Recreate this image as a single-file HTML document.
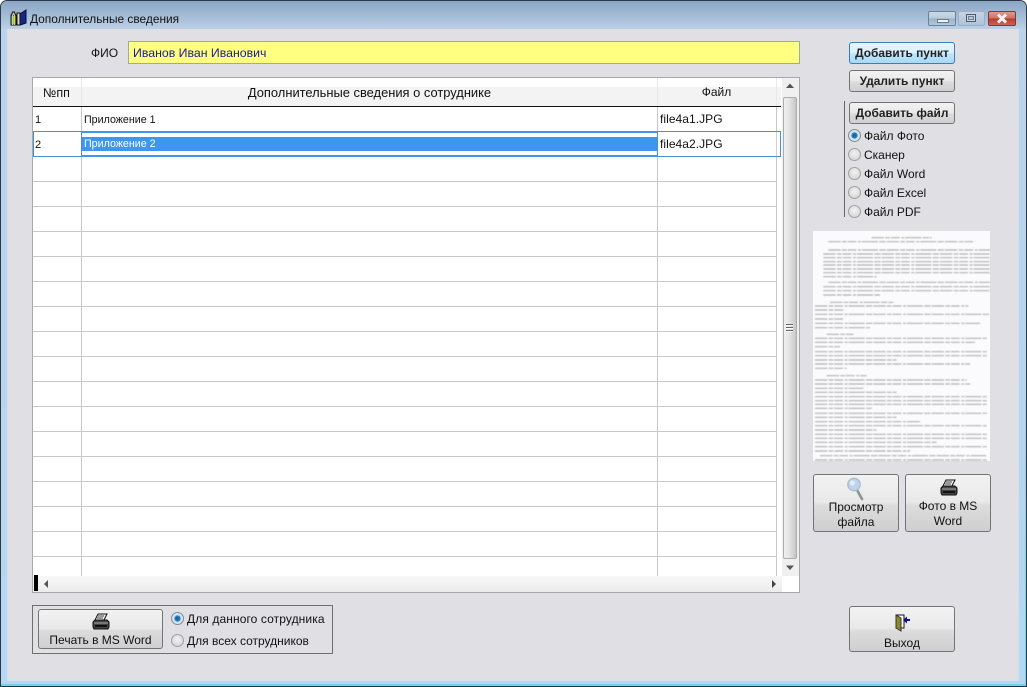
<!DOCTYPE html>
<html><head><meta charset="utf-8">
<style>
html,body{margin:0;padding:0;width:1027px;height:687px;overflow:hidden;background:#fff}
body{font-family:"Liberation Sans",sans-serif;font-size:12px;color:#111;position:relative}
div,span{position:absolute;box-sizing:border-box}
.t{white-space:nowrap;line-height:14px}
.btn{border:1px solid #747474;border-radius:3px;background:linear-gradient(#f2f2f2 0,#e9e9e9 48%,#dcdcdc 54%,#cfcfcf 100%);text-align:center;color:#111}
.btn.b{font-weight:bold;line-height:21px;font-size:11.9px;color:#222}
.rad{width:13px;height:13px;border-radius:50%;border:1px solid #a0a0a0;background:radial-gradient(circle at 50% 40%,#f2f2f2,#cfcfcf)}
.rad.on{background:radial-gradient(circle,#0b5c98 0,#2184c8 34%,#d8e2ea 46%,#e6e6e6 100%);border-color:#7d8c98}
.hl{height:1px;background:#c8c8c8;left:33px;width:743px}
.vl{width:1px;background:#c8c8c8;top:107px;height:469px}
</style></head><body>
<!-- window frame -->
<div style="left:0;top:0;width:1027px;height:687px;background:#b9d4ee;border:1px solid #2a3a48;border-radius:7px 7px 0 0;border-bottom-color:#14384e"></div>
<div style="left:1px;top:1px;width:1025px;height:28px;background:linear-gradient(#8aa6c4,#bcd0e6);border-radius:6px 6px 0 0"></div>
<div style="left:1px;top:29px;width:7px;height:655px;background:linear-gradient(#bcd3ea,#b8d6f2)"></div>
<div style="left:1018px;top:29px;width:8px;height:655px;background:linear-gradient(#bcd3ea,#b2d8f2)"></div>
<div style="left:1px;top:680px;width:1025px;height:5px;background:#b2d8f2"></div>
<div style="left:1px;top:684px;width:1025px;height:2px;background:#7ccdea"></div>
<div style="left:1025px;top:400px;width:1px;height:286px;background:linear-gradient(#a8cde6,#7ccdea)"></div>
<div style="left:7px;top:29px;width:1012px;height:652px;background:#d2e1ef"></div>
<div style="left:8px;top:29px;width:1010px;height:651px;background:#dfdfe4"></div>
<!-- title icon -->
<svg style="position:absolute;left:10px;top:9px" width="17" height="17" viewBox="0 0 17 17">
<path d="M1 6h5v10H1z" fill="#7fc08e" stroke="#111"/><path d="M2.500 6v10M4.500 6v10" stroke="#e4d850"/>
<path d="M1.500 6l1-3h2l1 3" fill="#bbb" stroke="#111"/>
<path d="M7 4h3v12H7z" fill="#e0e0a0" stroke="#111"/>
<path d="M10 5l6-4v13l-6 2z" fill="#14288c" stroke="#080830"/>
</svg>
<div class="t" style="left:30px;top:12px;font-size:11.9px;color:#111">Дополнительные сведения</div>
<!-- window buttons -->
<div style="left:928px;top:11px;width:28px;height:15px;border:1px solid #6a8298;border-radius:2px;background:linear-gradient(#ccdae8 0,#b8cadc 50%,#9ab2c8 51%,#b2c8dc 100%)"></div>
<div style="left:937px;top:19px;width:12px;height:4px;background:#eef3f8;border:1px solid #6a7b8c"></div>
<div style="left:958px;top:11px;width:27px;height:15px;border:1px solid #9cb1c5;border-radius:2px;background:linear-gradient(#c4d4e4,#afc4d9)"></div>
<div style="left:966px;top:14px;width:10px;height:8px;border:1px solid #4b5b6b;background:#c8d6e4"></div>
<div style="left:968px;top:16px;width:6px;height:4px;background:#b6c8da;border:1px solid #6f8092"></div>
<div style="left:988px;top:11px;width:28px;height:15px;border:1px solid #7a3b38;border-radius:2px;background:linear-gradient(#dc9a90 0,#cf6f62 50%,#b8392c 51%,#c9665a 100%)"></div>
<svg style="position:absolute;left:995px;top:13px" width="14" height="11" viewBox="0 0 14 11"><path d="M3 1.500l8 8M11 1.500l-8 8" stroke="#f4f4f4" stroke-width="3"/></svg>
<!-- FIO -->
<div class="t" style="left:91px;top:46px;font-size:12px">ФИО</div>
<div style="left:128px;top:41px;width:672px;height:23px;background:#ffff80;border:1px solid #9aa7b4"></div>
<div class="t" style="left:133px;top:46px;font-size:12.3px;color:#1a1a9a">Иванов Иван Иванович</div>
<!-- grid -->
<div style="left:32px;top:77px;width:768px;height:516px;background:#fff;border:1px solid #a9a9a9"></div>
<div style="left:33px;top:78px;width:748px;height:28px;background:linear-gradient(#fff 0,#fff 32%,#f3f3f3 33%,#f3f3f3 100%)"></div>
<div style="left:33px;top:106px;width:748px;height:1px;background:#111"></div>
<div style="left:81px;top:78px;width:1px;height:28px;background:#e8e8e8"></div>
<div style="left:657px;top:78px;width:1px;height:28px;background:#e8e8e8"></div>
<div style="left:776px;top:78px;width:1px;height:28px;background:#e8e8e8"></div>
<div class="t" style="left:43px;top:86px;font-size:12.5px">№пп</div>
<div class="t" style="left:82px;top:86px;width:575px;text-align:center;font-size:12.9px">Дополнительные сведения о сотруднике</div>
<div class="t" style="left:657px;top:85px;width:119px;text-align:center">Файл</div>
<div class="vl" style="left:81px"></div><div class="vl" style="left:657px"></div><div class="vl" style="left:776px"></div>
<div class="hl" style="top:131px"></div><div class="hl" style="top:156px"></div><div class="hl" style="top:181px"></div><div class="hl" style="top:206px"></div><div class="hl" style="top:231px"></div><div class="hl" style="top:256px"></div><div class="hl" style="top:281px"></div><div class="hl" style="top:306px"></div><div class="hl" style="top:331px"></div><div class="hl" style="top:356px"></div><div class="hl" style="top:381px"></div><div class="hl" style="top:406px"></div><div class="hl" style="top:431px"></div><div class="hl" style="top:456px"></div><div class="hl" style="top:481px"></div><div class="hl" style="top:506px"></div><div class="hl" style="top:531px"></div><div class="hl" style="top:556px"></div>
<!-- rows -->
<div class="t" style="left:35px;top:113px;font-size:11px">1</div>
<div class="t" style="left:84px;top:113px;font-size:10.7px">Приложение 1</div>
<div class="t" style="left:660px;top:112px;font-size:12px;letter-spacing:.05px">file4a1.JPG</div>
<div style="left:33px;top:131px;width:49px;height:26px;background:#fff;border:1px solid #4a90d0"></div>
<div class="t" style="left:35px;top:138px;font-size:11px">2</div>
<div style="left:82px;top:131px;width:576px;height:26px;background:#fff;border-top:2px solid #3f96ee;border-bottom:2px solid #3f96ee"></div>
<div style="left:82px;top:137px;width:575px;height:14px;background:#3f96ee"></div>
<div class="t" style="left:84px;top:137px;font-size:10.7px;color:#fff">Приложение 2</div>
<div style="left:657px;top:131px;width:124px;height:26px;background:#fff;border:1px solid #4a90d0"></div>
<div style="left:776px;top:132px;width:1px;height:24px;background:#d0d0d0"></div>
<div class="t" style="left:660px;top:137px;font-size:12px;letter-spacing:.05px">file4a2.JPG</div>
<!-- v scrollbar -->
<div style="left:782px;top:78px;width:17px;height:498px;background:#f0f0f0"></div>
<svg style="position:absolute;left:785px;top:83px" width="10" height="6"><path d="M5 0.500L9 5H1z" fill="#555"/></svg>
<div style="left:783px;top:97px;width:14px;height:462px;border:1px solid #adadad;border-radius:2px;background:linear-gradient(90deg,#f0f0f0,#e4e4e4 45%,#c6c6c6)"></div>
<div style="left:786px;top:324px;width:7px;height:1px;background:#666;box-shadow:0 3px 0 #666,0 6px 0 #666"></div>
<div style="left:786px;top:325px;width:7px;height:1px;background:#fff;box-shadow:0 3px 0 #fff,0 6px 0 #fff"></div>
<svg style="position:absolute;left:785px;top:565px" width="10" height="6"><path d="M1 0.500H9L5 5z" fill="#555"/></svg>
<!-- h scrollbar -->
<div style="left:33px;top:576px;width:749px;height:16px;background:linear-gradient(#f8f8f8,#ececec)"></div>
<div style="left:34px;top:575px;width:4px;height:16px;background:#000"></div>
<svg style="position:absolute;left:43px;top:579px" width="6" height="10"><path d="M5 1V9L1 5z" fill="#555"/></svg>
<svg style="position:absolute;left:771px;top:579px" width="6" height="10"><path d="M1 1V9L5 5z" fill="#444"/></svg>
<!-- right buttons -->
<div class="btn b" style="left:849px;top:42px;width:106px;height:22px;border-color:#3c7fb1;background:linear-gradient(#eaf6fd 0,#d9f0fc 48%,#bee6fd 54%,#a7d9f5 100%)">Добавить пункт</div>
<div class="btn b" style="left:849px;top:70px;width:106px;height:22px">Удалить пункт</div>
<div style="left:844px;top:101px;width:1px;height:116px;background:#666"></div>
<div class="btn b" style="left:849px;top:102px;width:106px;height:22px">Добавить файл</div>
<div class="rad on" style="left:848px;top:129px"></div><div class="t" style="left:864px;top:129px">Файл Фото</div>
<div class="rad" style="left:848px;top:148px"></div><div class="t" style="left:864px;top:148px">Сканер</div>
<div class="rad" style="left:848px;top:167px"></div><div class="t" style="left:864px;top:167px">Файл Word</div>
<div class="rad" style="left:848px;top:186px"></div><div class="t" style="left:864px;top:186px">Файл Excel</div>
<div class="rad" style="left:848px;top:205px"></div><div class="t" style="left:864px;top:205px">Файл PDF</div>
<!-- preview -->
<div style="left:813px;top:231px;width:177px;height:230px;background:#fbfbfd"></div>
<svg style="position:absolute;left:800px;top:225px;filter:blur(.5px)" width="200" height="240" viewBox="0 0 600 720">
<g stroke="#b0b0b2" stroke-width="3.6" fill="none" stroke-dasharray="37 4 14 3 26 5 9 3 48 4 19 3">
<path d="M215 38H395M85 50H525M85 75H570M70 87H570M70 98H570M70 110H570M70 120H570M70 132H570M70 143H570M70 155H230M85 172H570M70 185H570M70 197H570M70 210H240M90 232H280M45 243H505M45 255H135M45 268H570M45 282H130M45 295H540M45 308H210M80 328H160M45 340H560M45 352H525M45 365H120M45 380H560M45 392H560M45 405H290M45 417H510M45 430H140M80 452H200M45 465H500M45 477H510M45 490H190M45 502H290M45 515H560M45 527H560M45 538H560M45 550H215M45 565H560M45 577H290M45 590H360M45 602H560M45 615H230M45 628H560M45 640H560M45 652H410M45 665H560M45 678H330M60 692H560M45 705H560"/>
</g></svg>
<!-- Просмотр -->
<div class="btn" style="left:813px;top:474px;width:86px;height:58px"></div>
<svg style="position:absolute;left:846px;top:477px" width="20" height="24" viewBox="0 0 20 24"><path d="M11 13l5 9" stroke="#8f9499" stroke-width="2.600" stroke-linecap="round"/><circle cx="8" cy="7.500" r="6.200" fill="#bfd4ea" stroke="#a8bccf" stroke-width="1.300"/><circle cx="6.500" cy="6" r="2.500" fill="#e4eef7"/></svg>
<div class="t" style="left:813px;top:500px;width:86px;text-align:center;line-height:15px">Просмотр<br>файла</div>
<!-- Фото в MS Word -->
<div class="btn" style="left:905px;top:474px;width:86px;height:58px"></div>
<svg style="position:absolute;left:940px;top:479px" width="18" height="17" viewBox="0 0 18 17"><path d="M6 1h9l-3 6H3z" fill="#eee" stroke="#111"/><path d="M6 3h6M5 5h6" stroke="#444"/><path d="M1 9l2-2h12l2 2v5l-1 2H2l-1-2z" fill="#444" stroke="#111"/><path d="M2 10h14" stroke="#aaa"/><path d="M3 13h12" stroke="#111" stroke-width="2"/></svg>
<div class="t" style="left:905px;top:499px;width:86px;text-align:center;line-height:15px">Фото в MS<br>Word</div>
<!-- Выход -->
<div class="btn" style="left:849px;top:606px;width:106px;height:46px"></div>
<svg style="position:absolute;left:894px;top:614px" width="17" height="18" viewBox="0 0 17 18"><path d="M2 1h8v13H2z" fill="#fff" stroke="#111"/><path d="M2 1l5 3v13l-5-3z" fill="#8a8a2a" stroke="#333"/><path d="M10 6h6" stroke="#10108a" stroke-width="2"/><path d="M13 2.500L9 6l4 3.500z" fill="#10108a"/></svg>
<div class="t" style="left:849px;top:636px;width:106px;text-align:center">Выход</div>
<!-- print group -->
<div style="left:32px;top:605px;width:301px;height:49px;border:1px solid #6f6f6f"></div>
<div class="btn" style="left:38px;top:609px;width:125px;height:40px"></div>
<svg style="position:absolute;left:92px;top:613px" width="18" height="17" viewBox="0 0 18 17"><path d="M6 1h9l-3 6H3z" fill="#eee" stroke="#111"/><path d="M6 3h6M5 5h6" stroke="#444"/><path d="M1 9l2-2h12l2 2v5l-1 2H2l-1-2z" fill="#444" stroke="#111"/><path d="M2 10h14" stroke="#aaa"/><path d="M3 13h12" stroke="#111" stroke-width="2"/></svg>
<div class="t" style="left:38px;top:633px;width:125px;text-align:center">Печать в MS Word</div>
<div class="rad on" style="left:171px;top:612px"></div><div class="t" style="left:187px;top:612px;letter-spacing:.1px">Для данного сотрудника</div>
<div class="rad" style="left:171px;top:634px"></div><div class="t" style="left:187px;top:634px">Для всех сотрудников</div>
</body></html>
